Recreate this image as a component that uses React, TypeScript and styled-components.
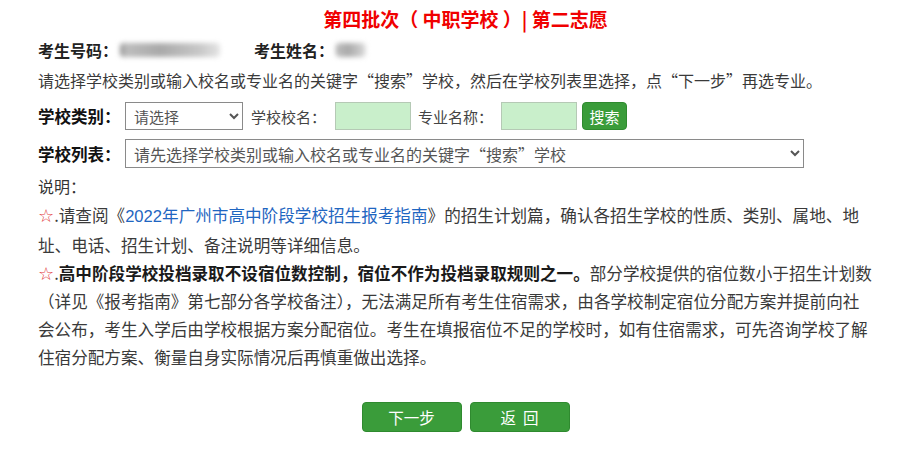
import React from "react";
import styled, { createGlobalStyle } from "styled-components";

const Global = createGlobalStyle`
  html, body { margin: 0; padding: 0; background: #fff; }
  body { font-family: "Liberation Serif", "Noto Sans CJK SC", serif; color: #333; }
`;

const Page = styled.div`
  padding: 0 28px 0 38px;
  width: 921px;
  box-sizing: border-box;
`;

const Title = styled.h1`
  margin: 0;
  height: 38px;
  line-height: 38px;
  text-align: center;
  font-family: "Noto Sans CJK SC", "Liberation Sans", sans-serif;
  font-size: 19px;
  font-weight: 700;
  color: #f00000;
  white-space: pre;
`;

const InfoRow = styled.div`
  display: flex;
  align-items: center;
  height: 24px;
  font-size: 16px;
  font-family: "Noto Sans CJK SC", serif;
`;

const InfoLabel = styled.span`
  font-weight: 700;
  color: #222;
`;

const Blur = styled.span<{ $w: number }>`
  display: inline-block;
  width: ${(p) => p.$w}px;
  height: 14px;
  margin: 0 2px;
  background: linear-gradient(90deg, #8a8a8a 0, #bdbdbd 6%, #a9a9a9 40%, #c8c8c8 80%, #e4e4e4);
  filter: blur(2.5px);
  border-radius: 4px;
`;

const InfoGap = styled.span`
  display: inline-block;
  width: 32px;
`;

const Instruction = styled.p`
  margin: 6px 0 0;
  height: 24px;
  line-height: 24px;
  font-size: 16px;
  font-family: "Noto Sans CJK SC", serif;
  color: #3a3a3a;
  white-space: nowrap;
`;

const FormRow = styled.div<{ $mt: number; $h: number }>`
  display: flex;
  align-items: center;
  margin-top: ${(p) => p.$mt}px;
  height: ${(p) => p.$h}px;
  font-family: "Noto Sans CJK SC", sans-serif;
`;

const BoldLabel = styled.span`
  font-weight: 700;
  font-size: 16.5px;
  color: #111;
  width: 87px;
  flex: none;
  white-space: nowrap;
`;

const FieldLabel = styled.span<{ $ml: number }>`
  margin-left: ${(p) => p.$ml}px;
  font-size: 15px;
  color: #444;
  white-space: nowrap;
`;

const Select = styled.select<{ $w: number; $fs: number }>`
  width: ${(p) => p.$w}px;
  height: 100%;
  box-sizing: border-box;
  border: 1px solid #8a8a8a;
  border-radius: 0;
  background: #fff;
  color: #555;
  font-family: "Noto Sans CJK SC", sans-serif;
  font-size: ${(p) => p.$fs}px;
  padding: 0 4px;
`;

const GreenInput = styled.input<{ $ml: number }>`
  margin-left: ${(p) => p.$ml}px;
  width: 76px;
  height: 28px;
  box-sizing: border-box;
  border: 1px solid #b5c9b5;
  background: #c9efcb;
  outline: none;
`;

const SearchButton = styled.button`
  margin-left: 5px;
  width: 45px;
  height: 28px;
  border: 1px solid #2f8a2f;
  border-radius: 4px;
  background: #3a9c3a;
  color: #fff;
  font-family: "Noto Sans CJK SC", sans-serif;
  font-size: 15px;
  padding: 0;
`;

const NoteTitle = styled.div`
  margin-top: 6px;
  height: 24px;
  line-height: 24px;
  font-size: 16px;
  font-family: "Noto Sans CJK SC", serif;
  color: #333;
`;

const Notes = styled.div`
  margin-top: 3px;
  font-size: 16.6px;
  line-height: 28px;
  font-family: "Noto Sans CJK SC", serif;
  color: #3a3a3a;
  white-space: nowrap;
`;

const Star = styled.span`
  color: #e23a3a;
  font-family: "DejaVu Sans", "Noto Sans CJK SC", sans-serif;
  font-size: 18px;
  line-height: 1;
`;

const Link = styled.a`
  color: #1f66c1;
  text-decoration: none;
  font-family: "Liberation Sans", "Noto Sans CJK SC", sans-serif;
`;

const Strong = styled.b`
  font-weight: 700;
  color: #1a1a1a;
`;

const ButtonBar = styled.div`
  display: flex;
  justify-content: center;
  gap: 8px;
  margin-top: 31px;
`;

const ActionButton = styled.button`
  width: 100px;
  height: 30px;
  border: 1px solid #2f8a2f;
  border-radius: 4px;
  background: #3a9c3a;
  color: #fff;
  font-family: "Noto Sans CJK SC", sans-serif;
  font-size: 15.5px;
  padding: 0;
  white-space: pre;
`;

export default function App() {
  return (
    <>
      <Global />
      <Page>
        <Title>第四批次（ 中职学校 ）| 第二志愿</Title>
        <InfoRow>
          <InfoLabel>考生号码：</InfoLabel>
          <Blur $w={100} />
          <InfoGap />
          <InfoLabel>考生姓名：</InfoLabel>
          <Blur $w={30} />
        </InfoRow>
        <Instruction>
          请选择学校类别或输入校名或专业名的关键字“搜索”学校，然后在学校列表里选择，点“下一步”再选专业。
        </Instruction>
        <FormRow $mt={10} $h={28}>
          <BoldLabel>学校类别：</BoldLabel>
          <Select $w={118} $fs={15} defaultValue="">
            <option value="">请选择</option>
          </Select>
          <FieldLabel $ml={8}>学校校名：</FieldLabel>
          <GreenInput $ml={9} />
          <FieldLabel $ml={7}>专业名称：</FieldLabel>
          <GreenInput $ml={8} />
          <SearchButton>搜索</SearchButton>
        </FormRow>
        <FormRow $mt={9} $h={29}>
          <BoldLabel>学校列表：</BoldLabel>
          <Select $w={679} $fs={16} defaultValue="">
            <option value="">请先选择学校类别或输入校名或专业名的关键字“搜索”学校</option>
          </Select>
        </FormRow>
        <NoteTitle>说明：</NoteTitle>
        <Notes>
          <Star>☆</Star>.请查阅《<Link href="#">2022年广州市高中阶段学校招生报考指南</Link>》的招生计划篇，确认各招生学校的性质、类别、属地、地
          <br />
          址、电话、招生计划、备注说明等详细信息。
          <br />
          <Star>☆</Star>.<Strong>高中阶段学校投档录取不设宿位数控制，宿位不作为投档录取规则之一。</Strong>部分学校提供的宿位数小于招生计划数
          <br />
          （详见《报考指南》第七部分各学校备注），无法满足所有考生住宿需求，由各学校制定宿位分配方案并提前向社
          <br />
          会公布，考生入学后由学校根据方案分配宿位。考生在填报宿位不足的学校时，如有住宿需求，可先咨询学校了解
          <br />
          住宿分配方案、衡量自身实际情况后再慎重做出选择。
        </Notes>
        <ButtonBar>
          <ActionButton>下一步</ActionButton>
          <ActionButton>{"返  回"}</ActionButton>
        </ButtonBar>
      </Page>
    </>
  );
}
